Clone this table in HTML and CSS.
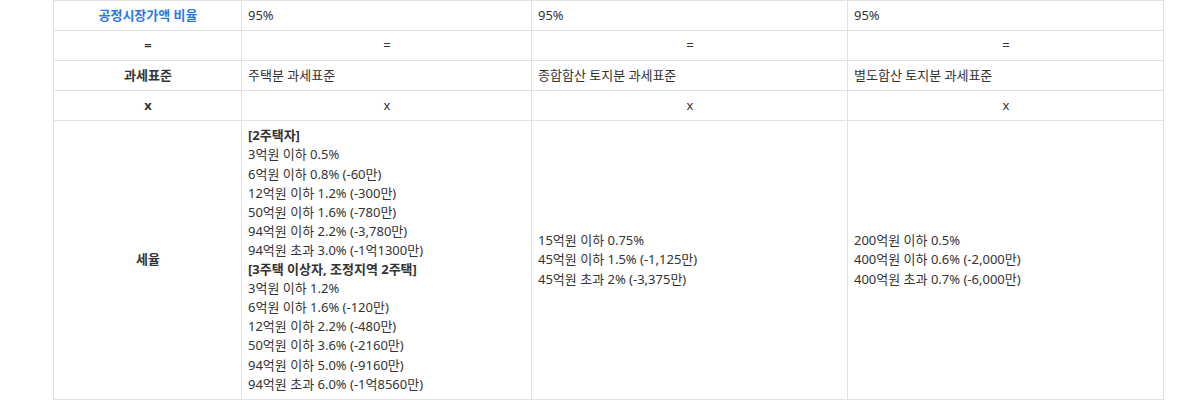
FILE: index.html
```html
<!DOCTYPE html>
<html lang="ko">
<head>
<meta charset="utf-8">
<link rel="stylesheet" href="styles.css">
</head>
<body>
<div class="wrap">
<table class="tax">
  <colgroup>
    <col class="c1"><col class="c2"><col class="c3"><col class="c4">
  </colgroup>
  <tr>
    <th><a class="link">공정시장가액 비율</a></th>
    <td>95%</td>
    <td>95%</td>
    <td>95%</td>
  </tr>
  <tr class="op">
    <th>=</th>
    <td>=</td>
    <td>=</td>
    <td>=</td>
  </tr>
  <tr>
    <th>과세표준</th>
    <td>주택분 과세표준</td>
    <td>종합합산 토지분 과세표준</td>
    <td>별도합산 토지분 과세표준</td>
  </tr>
  <tr class="op">
    <th>x</th>
    <td>x</td>
    <td>x</td>
    <td>x</td>
  </tr>
  <tr>
    <th>세율</th>
    <td>
      <b>[2주택자]</b><br>
      3억원 이하 0.5%<br>
      6억원 이하 0.8% (-60만)<br>
      12억원 이하 1.2% (-300만)<br>
      50억원 이하 1.6% (-780만)<br>
      94억원 이하 2.2% (-3,780만)<br>
      94억원 초과 3.0% (-1억1300만)<br>
      <b>[3주택 이상자, 조정지역 2주택]</b><br>
      3억원 이하 1.2%<br>
      6억원 이하 1.6% (-120만)<br>
      12억원 이하 2.2% (-480만)<br>
      50억원 이하 3.6% (-2160만)<br>
      94억원 이하 5.0% (-9160만)<br>
      94억원 초과 6.0% (-1억8560만)
    </td>
    <td>
      15억원 이하 0.75%<br>
      45억원 이하 1.5% (-1,125만)<br>
      45억원 초과 2% (-3,375만)
    </td>
    <td>
      200억원 이하 0.5%<br>
      400억원 이하 0.6% (-2,000만)<br>
      400억원 초과 0.7% (-6,000만)
    </td>
  </tr>
</table>
</div>
</body>
</html>
```
FILE: styles.css
```css
html, body {
  margin: 0;
  padding: 0;
  background: #fff;
}
.wrap {
  padding-left: 53px;
}
.tax {
  border-collapse: collapse;
  width: 1110px;
  table-layout: fixed;
  font-family: "Noto Sans", "Noto Sans CJK KR", sans-serif;
  font-size: 13px;
  line-height: 19.1px;
  color: #333;
}
.c1 { width: 188px; }
.c2 { width: 290px; }
.c3 { width: 316px; }
.c4 { width: 316px; }
.tax th, .tax td {
  border: 1px solid #dfe1e6;
  padding: 5px 5px 5px 6px;
  vertical-align: middle;
  text-align: left;
}
.tax th {
  text-align: center;
  font-weight: 700;
  color: #333;
}
.tax .op td {
  text-align: center;
}
.tax b {
  font-weight: 700;
}
.link {
  color: #2a78e0;
  font-weight: 700;
}
```
